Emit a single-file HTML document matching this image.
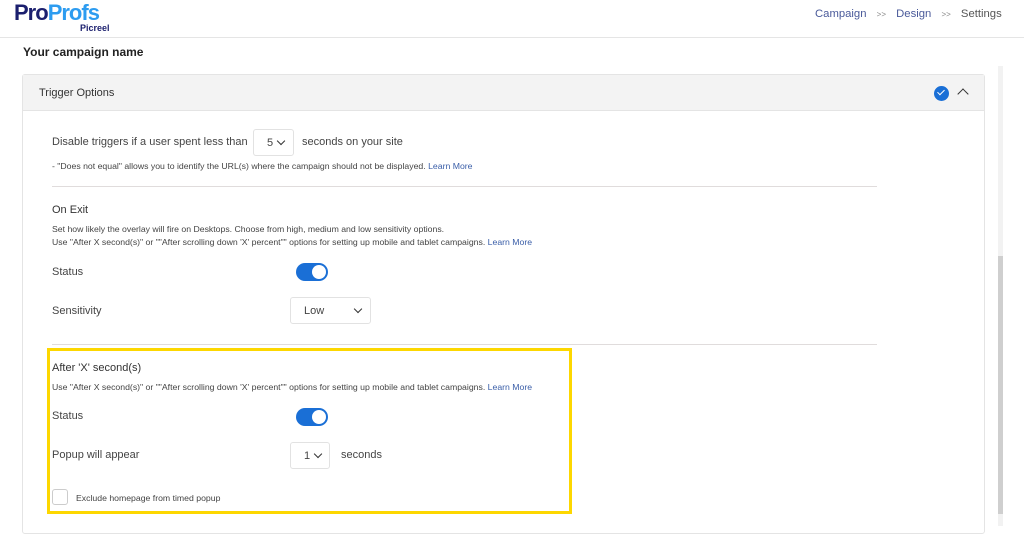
<!DOCTYPE html>
<html><head><meta charset="utf-8"><style>
*{margin:0;padding:0;box-sizing:border-box}
body{width:1024px;height:526px;overflow:hidden;background:#fff;font-family:"Liberation Sans",Arial,sans-serif;color:#333;position:relative}
.a{position:absolute;white-space:nowrap}
.sm{font-size:8.7px;color:#444}
.lnk{color:#3a5ea8}
.lbl{font-size:11px;color:#444}
.tog{position:absolute;width:32px;height:18px;border-radius:9px;background:#1a6fd6}
.tog:after{content:"";position:absolute;right:2px;top:2px;width:14px;height:14px;border-radius:50%;background:#fff}
.sel{position:absolute;border:1px solid #e2e2e2;border-radius:3px;background:#fff;font-size:11px;color:#444}
.chev{position:absolute;width:6px;height:6px;border-right:1.8px solid #333;border-bottom:1.8px solid #333;transform:rotate(45deg)}
</style></head><body>
<div class="a" style="left:14px;top:0px;font-size:22px;font-weight:900;letter-spacing:-1px;color:#1b1f6e">Pro<span style="color:#2d9cf0">Profs</span></div>
<div class="a" style="left:80px;top:23px;font-size:9px;font-weight:bold;color:#1b1f6e">Picreel</div>
<div class="a" style="left:815px;top:8px;font-size:11.3px;color:#4a5a9a">Campaign <span style="color:#888;font-size:8px;margin:0 7px">&gt;&gt;</span> Design <span style="color:#888;font-size:8px;margin:0 7px">&gt;&gt;</span> <span style="color:#555">Settings</span></div>
<div class="a" style="left:0;top:37px;width:1024px;height:1px;background:#e5e5e5"></div>
<div class="a" style="left:23px;top:45px;font-size:12px;font-weight:bold;color:#222">Your campaign name</div>

<div class="a" style="left:22px;top:74px;width:963px;height:460px;border:1px solid #e4e4e4;border-radius:3px"></div>
<div class="a" style="left:23px;top:75px;width:961px;height:36px;background:#f3f3f3;border-bottom:1px solid #e4e4e4"></div>
<div class="a" style="left:39px;top:87px;font-size:11px;color:#333">Trigger Options</div>
<div class="a" style="left:934px;top:86px;width:15px;height:15px;border-radius:50%;background:#1a6fd6"></div>
<div class="a" style="left:939px;top:88px;width:4px;height:7px;border-right:1.5px solid #fff;border-bottom:1.5px solid #fff;transform:rotate(45deg)"></div>
<div class="a" style="left:959px;top:90px;width:8px;height:8px;border-left:1.5px solid #333;border-top:1.5px solid #333;transform:rotate(45deg)"></div>

<div class="a" style="left:998px;top:66px;width:5px;height:460px;background:#f2f2f2"></div>
<div class="a" style="left:998px;top:256px;width:5px;height:258px;background:#cfcfcf"></div>

<div class="a lbl" style="left:52px;top:136px">Disable triggers if a user spent less than</div>
<div class="sel" style="left:253px;top:129px;width:41px;height:27px"><span class="a" style="left:13px;top:7px">5</span><div class="chev" style="left:24px;top:8px"></div></div>
<div class="a lbl" style="left:302px;top:136px">seconds on your site</div>
<div class="a sm" style="left:52px;top:161px">- "Does not equal" allows you to identify the URL(s) where the campaign should not be displayed. <span class="lnk">Learn More</span></div>
<div class="a" style="left:52px;top:186px;width:825px;height:1px;background:#e0dcdc"></div>

<div class="a" style="left:52px;top:204px;font-size:11px;color:#333">On Exit</div>
<div class="a sm" style="left:52px;top:224px">Set how likely the overlay will fire on Desktops. Choose from high, medium and low sensitivity options.</div>
<div class="a sm" style="left:52px;top:237px">Use "After X second(s)" or ""After scrolling down 'X' percent"" options for setting up mobile and tablet campaigns. <span class="lnk">Learn More</span></div>
<div class="a lbl" style="left:52px;top:266px">Status</div>
<div class="tog" style="left:296px;top:263px"></div>
<div class="a lbl" style="left:52px;top:305px">Sensitivity</div>
<div class="sel" style="left:290px;top:297px;width:81px;height:27px"><span class="a" style="left:13px;top:7px">Low</span><div class="chev" style="left:64px;top:8px"></div></div>
<div class="a" style="left:52px;top:344px;width:825px;height:1px;background:#e0dcdc"></div>

<div class="a" style="left:47px;top:348px;width:525px;height:166px;border:3px solid #fdd700"></div>
<div class="a" style="left:52px;top:362px;font-size:11px;color:#333">After 'X' second(s)</div>
<div class="a sm" style="left:52px;top:382px">Use "After X second(s)" or ""After scrolling down 'X' percent"" options for setting up mobile and tablet campaigns. <span class="lnk">Learn More</span></div>
<div class="a lbl" style="left:52px;top:410px">Status</div>
<div class="tog" style="left:296px;top:408px"></div>
<div class="a lbl" style="left:52px;top:449px">Popup will appear</div>
<div class="sel" style="left:290px;top:442px;width:40px;height:27px"><span class="a" style="left:13px;top:7px">1</span><div class="chev" style="left:24px;top:8px"></div></div>
<div class="a lbl" style="left:341px;top:449px">seconds</div>
<div class="a" style="left:52px;top:489px;width:16px;height:16px;border:1px solid #ccc;border-radius:3px"></div>
<div class="a sm" style="left:76px;top:493px">Exclude homepage from timed popup</div>
</body></html>
